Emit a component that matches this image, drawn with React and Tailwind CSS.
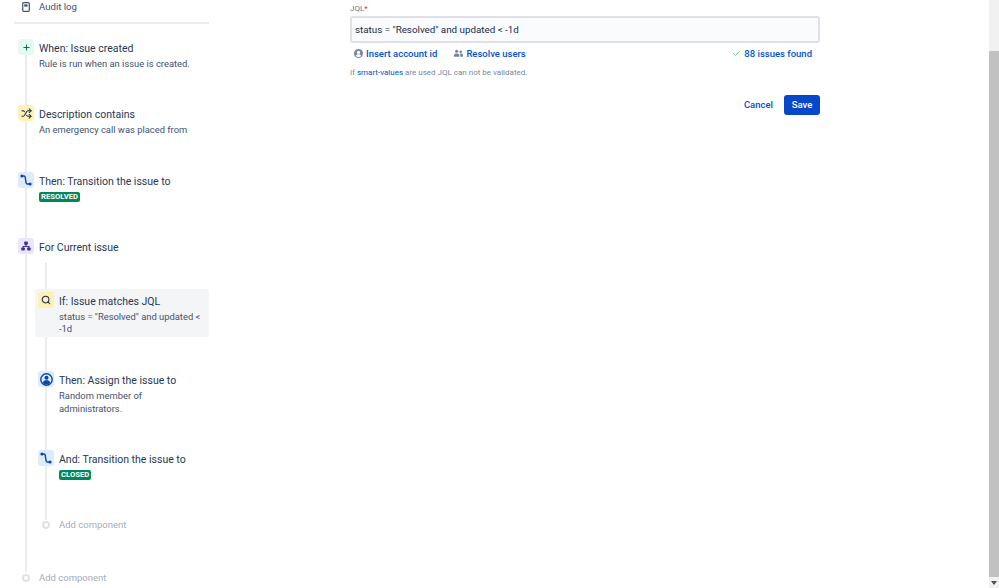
import React from "react";
import { Plus, Shuffle, Search, Check } from "lucide-react";

const TransitionIcon = () => (
  <svg width="12" height="12" viewBox="0 0 12 12" fill="none">
    <path d="M2 2h2c.8 0 1.1.5 1.2 1.2l.9 5.6c.1.7.4 1.2 1.2 1.2H10" stroke="#0747a6" strokeWidth="1.4" />
    <circle cx="1.9" cy="2" r="1.5" fill="#0747a6" />
    <circle cx="10.1" cy="10" r="1.5" fill="#0747a6" />
  </svg>
);

const BranchIcon = () => (
  <svg width="10" height="10" viewBox="0 0 10 10" fill="#403294">
    <rect x="3.2" y="0.5" width="3.6" height="3.4" rx="0.8" />
    <rect x="0.3" y="6.4" width="3.6" height="3.2" rx="0.8" />
    <rect x="6.1" y="6.4" width="3.6" height="3.2" rx="0.8" />
    <path d="M4.5 3.5h1v1.4h3v2h-1v-1h-5v1h-1v-2h3z" />
  </svg>
);

const UserIcon = () => (
  <svg width="13" height="13" viewBox="0 0 13 13">
    <circle cx="6.5" cy="6.5" r="5.7" fill="#deebff" stroke="#0747a6" strokeWidth="1.4" />
    <circle cx="6.5" cy="4.8" r="2" fill="#0747a6" />
    <path d="M2.8 9.8c.5-2 2-2.5 3.7-2.5s3.2.5 3.7 2.5c-1 1-2.3 1.6-3.7 1.6s-2.700-.6-3.7-1.6z" fill="#0747a6" />
  </svg>
);

const Step = ({ tone, icon, title, children, className = "" }) => (
  <div className={`relative flex gap-[5px] ${className}`}>
    <div className={`flex h-4 w-4 shrink-0 items-center justify-center rounded-[3px] ${tone}`}>{icon}</div>
    <div className="min-w-0 flex-1 pt-[1px]">
      <div className="whitespace-nowrap text-[10.5px] leading-[17px] text-[#253858]">{title}</div>
      {children}
    </div>
  </div>
);

const Desc = ({ children }) => (
  <div className="mt-[1px] whitespace-nowrap text-[9.4px] leading-[12.5px] text-[#42526e]">{children}</div>
);

const Lozenge = ({ children }) => (
  <span className="mt-[2px] block h-[10px] w-fit rounded-[2px] bg-[#00875a] px-[2px] text-[7.7px] font-bold leading-[10px] text-white">
    {children}
  </span>
);

const AddComponent = ({ className = "" }) => (
  <div className={`relative flex items-center gap-[5px] ${className}`}>
    <div className="flex w-4 shrink-0 justify-center">
      <div className="h-[8px] w-[8px] rounded-full border-2 border-[#dfe1e6] bg-white" />
    </div>
    <span className="text-[9.5px] leading-[14px] text-[#a5adba]">Add component</span>
  </div>
);

export default function App() {
  return (
    <div
      className="flex h-[588px] w-[999px] overflow-hidden bg-white"
      style={{ fontFamily: 'Roboto, "Open Sans", sans-serif' }}
    >
      <aside className="relative ml-[14px] w-[195px] shrink-0">
        <div className="flex h-[24px] items-start border-b-2 border-[#ebecf0] pl-[8px]">
          <svg className="mt-[2px]" width="8" height="10" viewBox="0 0 8 10" fill="none">
            <rect x="0.7" y="0.7" width="6.6" height="8.6" rx="1" stroke="#42526e" strokeWidth="1.2" />
            <rect x="2.2" y="2.4" width="3.4" height="2.2" fill="#42526e" />
          </svg>
          <span className="ml-[9px] text-[9.6px] leading-[14px] text-[#42526e]">Audit log</span>
        </div>

        <div className="absolute left-[11px] top-[50px] h-[522px] w-[2px] bg-[#ebecf0]" />
        <div className="absolute left-[31px] top-[262px] h-[258px] w-[2px] bg-[#ebecf0]" />

        <Step className="mt-[15px] pl-[4px]" tone="bg-[#e3fcef]" icon={<Plus size={9} strokeWidth={2.5} color="#006644" />} title="When: Issue created">
          <Desc>Rule is run when an issue is created.</Desc>
        </Step>
        <Step className="mt-[34.5px] pl-[4px]" tone="bg-[#fff0b3]" icon={<Shuffle size={11} strokeWidth={2.2} color="#172b4d" />} title="Description contains">
          <Desc>An emergency call was placed from</Desc>
        </Step>
        <Step className="mt-[35.500px] pl-[4px]" tone="bg-[#deebff]" icon={<TransitionIcon />} title="Then: Transition the issue to">
          <Lozenge>RESOLVED</Lozenge>
        </Step>
        <Step className="mt-[36px] pl-[4px]" tone="bg-[#eae6ff]" icon={<BranchIcon />} title="For Current issue" />

        <div className="relative ml-[21px] mt-[32.5px] rounded-[3px] bg-[#f4f5f7] pb-[1.5px] pl-[3px] pr-[3px] pt-[3px]">
          <Step tone="bg-[#fff0b3]" icon={<Search size={10} strokeWidth={2.5} color="#172b4d" />} title="If: Issue matches JQL">
            <Desc>
              status = "Resolved" and updated &lt;
              <br />
              -1d
            </Desc>
          </Step>
        </div>
        <Step className="ml-[24px] mt-[34px]" tone="bg-[#deebff]" icon={<UserIcon />} title="Then: Assign the issue to">
          <Desc>
            Random member of
            <br />
            administrators.
          </Desc>
        </Step>
        <Step className="ml-[24px] mt-[35px]" tone="bg-[#deebff]" icon={<TransitionIcon />} title="And: Transition the issue to">
          <Lozenge>CLOSED</Lozenge>
        </Step>
        <AddComponent className="ml-[24px] mt-[37.5px]" />
        <AddComponent className="ml-[4px] mt-[39px]" />
      </aside>

      <main className="ml-[141px] w-[470px] shrink-0 pt-[3px]">
        <div className="pt-[1px] text-[8px] leading-[10px] text-[#6b778c]">
          JQL<span className="text-[#de350b]">*</span>
        </div>
        <div className="mt-[2px] flex h-[27px] items-center rounded-[3px] border-2 border-[#dfe1e6] bg-[#fafbfc] px-[3px] pt-[1px] text-[9.8px] text-[#172b4d]">
          status = "Resolved" and updated &lt; -1d
        </div>
        <div className="mt-[4px] flex h-[15px] items-center pl-[4px] text-[9.5px] font-medium text-[#0052cc]">
          <svg className="-mt-[2px]" width="9" height="9" viewBox="0 0 13 13">
            <circle cx="6.5" cy="6.5" r="6.5" fill="#7a869a" />
            <circle cx="6.5" cy="5" r="2.3" fill="#fff" />
            <path d="M2.6 10.2c.6-2 2.2-2.7 3.9-2.7s3.3.7 3.9 2.7c-1 1-2.4 1.6-3.9 1.6s-2.9-.6-3.9-1.6z" fill="#fff" />
          </svg>
          <span className="ml-[3px]">Insert account id</span>
          <svg className="ml-[17px] -mt-[2px]" width="9" height="9" viewBox="0 0 10 9" fill="#7a869a">
            <circle cx="3" cy="2" r="1.8" />
            <circle cx="7.5" cy="2.6" r="1.4" />
            <path d="M0 8V6.2C0 5 1.4 4.4 3 4.4S6 5 6 6.2V8zM7 8V5.8c0-.5-.2-1-.5-1.2 1.5-.3 3.5.2 3.5 1.500V8z" />
          </svg>
          <span className="ml-[3px]">Resolve users</span>
          <span className="ml-auto mr-[8px] flex items-center">
            <Check className="-mt-[2px]" size={9} strokeWidth={2} color="#36b37e" />
            <span className="ml-[3px]">88 issues found</span>
          </span>
        </div>
        <div className="mt-[4px] text-[8px] leading-[14px] text-[#7a869a]">
          If <span className="text-[#0052cc]">smart-values</span> are used JQL can not be validated.
        </div>
        <div className="mt-[15px] flex items-center justify-end">
          <button className="mr-[11px] text-[9.5px] font-medium text-[#0052cc]">Cancel</button>
          <button className="h-[20px] w-[36px] rounded-[3px] bg-[#0747c9] text-[9.5px] font-medium leading-[20px] text-white">
            Save
          </button>
        </div>
      </main>

      <div className="ml-auto flex h-full w-[10px] flex-col bg-[#f1f1f1] pt-[51px]">
        <div className="h-[526px] w-full shrink-0 bg-[#c1c1c1]" />
        <div className="flex flex-1 items-center justify-center">
          <div className="h-0 w-0 border-x-[3px] border-t-[4px] border-x-transparent border-t-[#505050]" />
        </div>
      </div>
    </div>
  );
}
